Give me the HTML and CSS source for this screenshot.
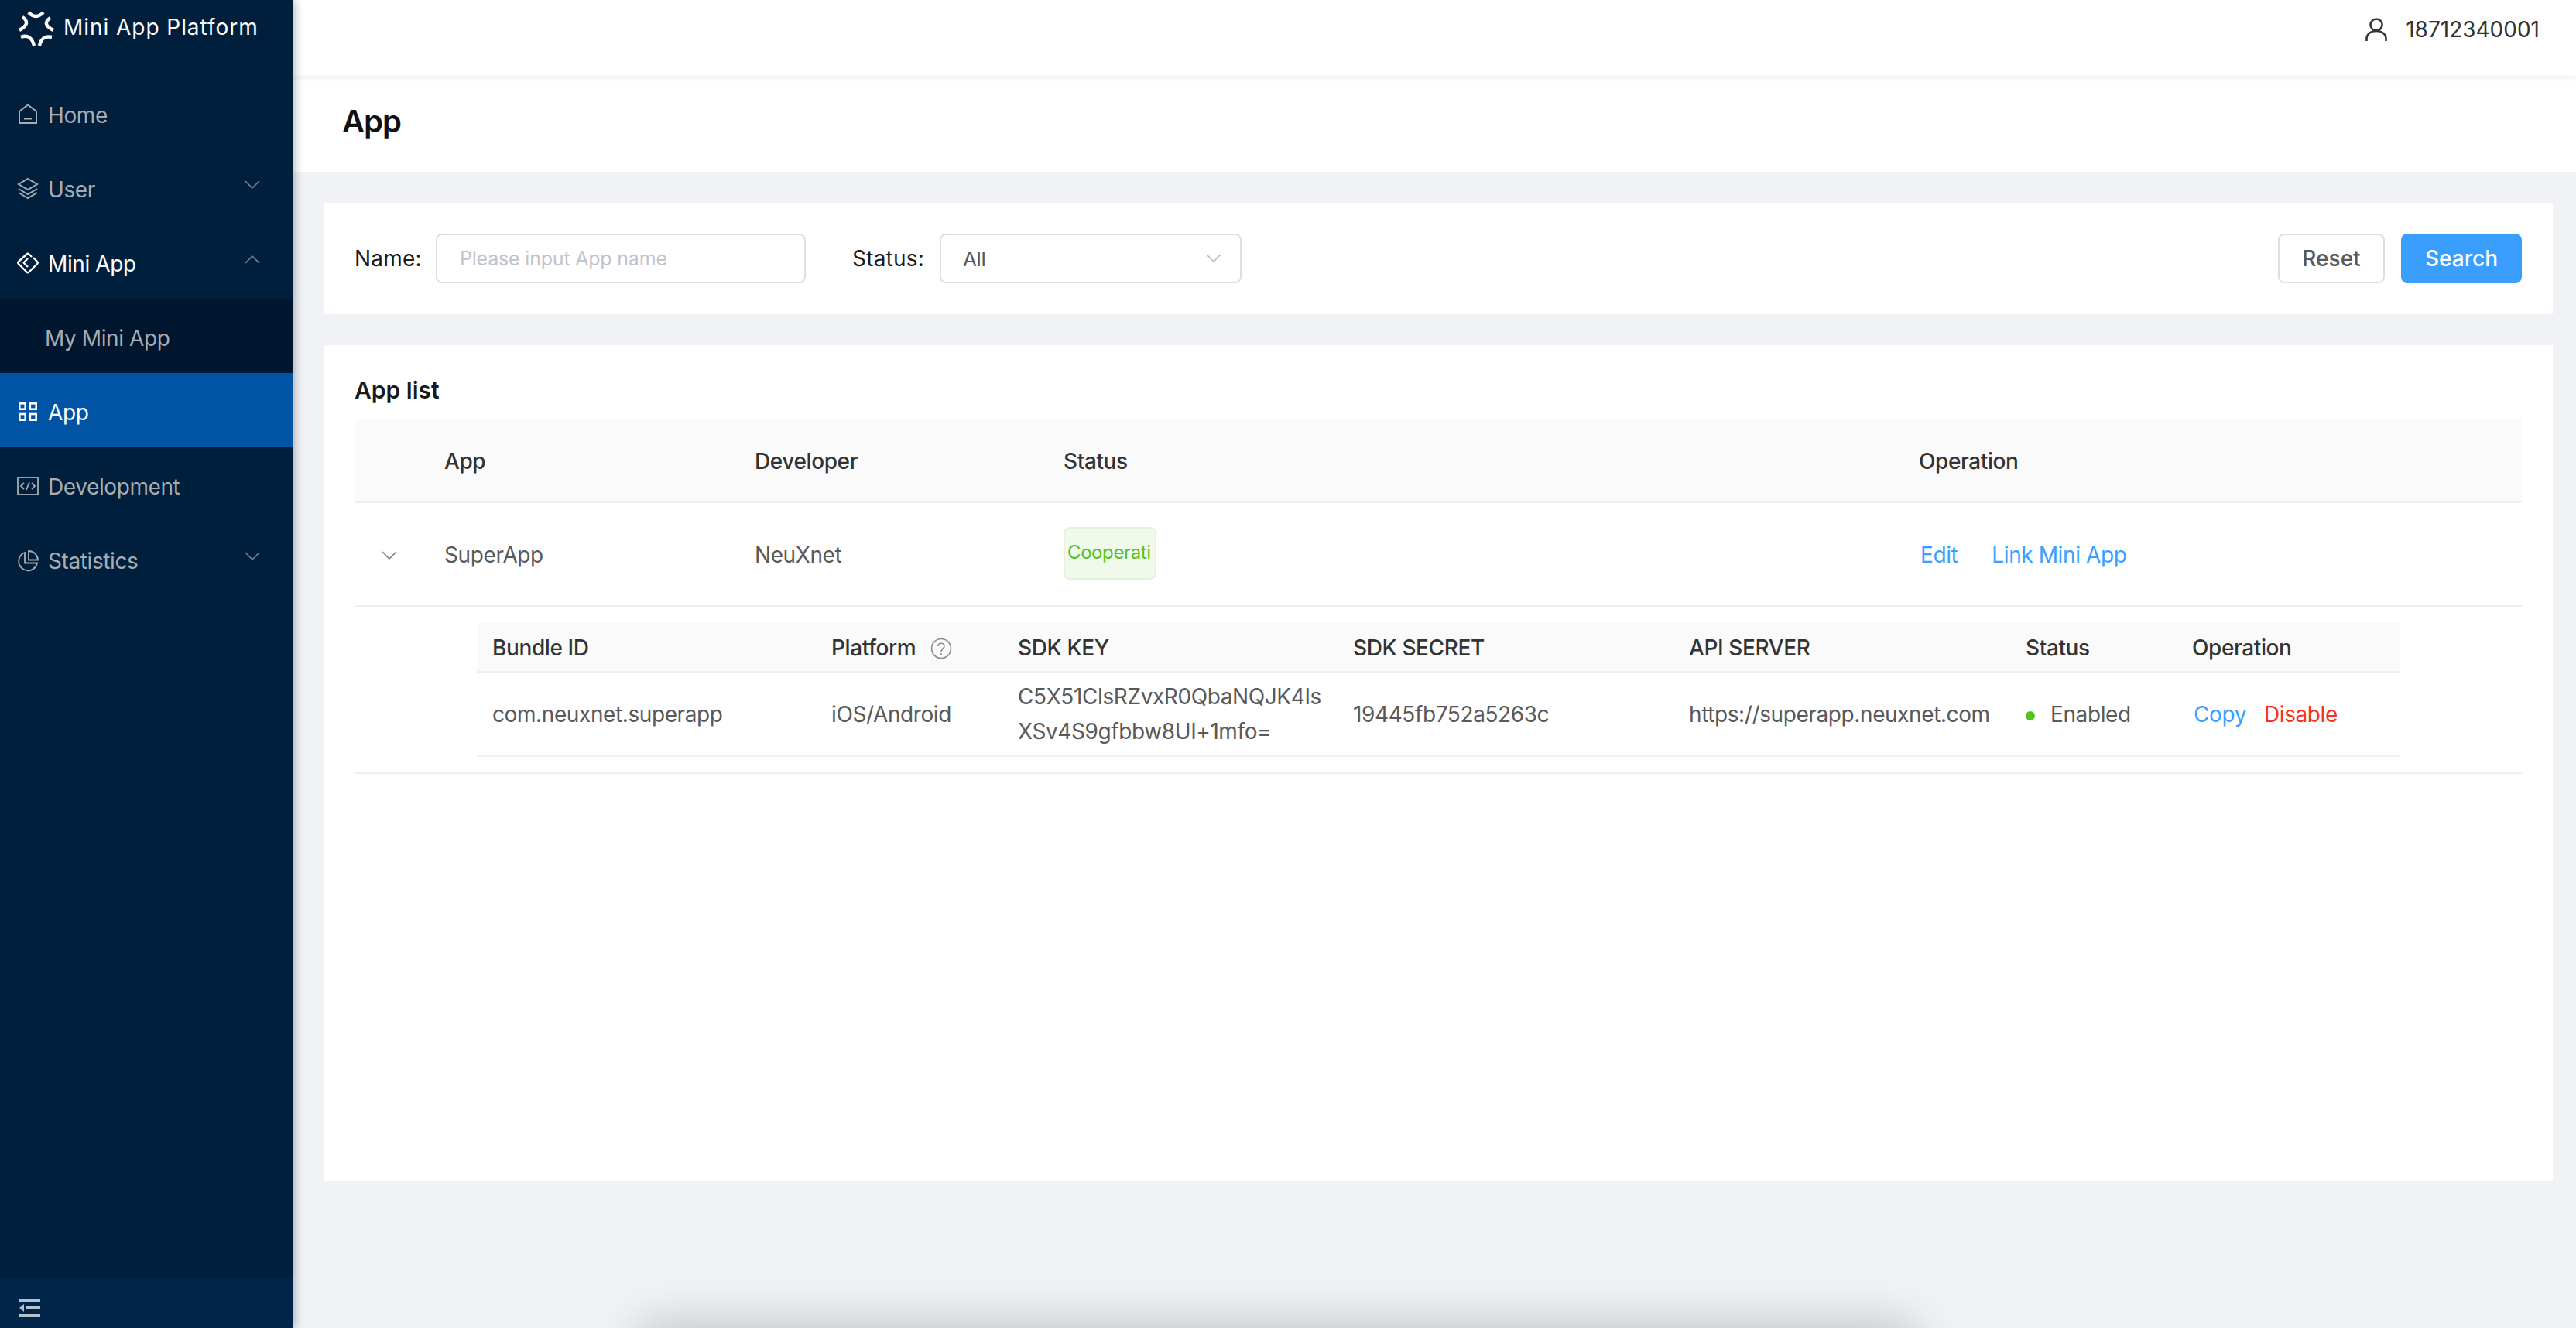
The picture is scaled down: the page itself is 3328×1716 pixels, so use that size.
FILE: index.html
```html
<!DOCTYPE html>
<html lang="en">

<head>
    <meta charset="UTF-8">
    <title>Mini App Platform</title>
    <link rel="stylesheet" href="styles.css">
</head>

<body>
    <div class="layout">
        <!-- sidebar -->
        <aside class="sidebar">
            <div class="logo">
                <svg class="logo-icon" viewBox="0 0 46 46" fill="none" stroke="#fff" stroke-width="4.4">
                    <path d="M13 1 Q22 11 32 1" />
                    <path d="M5 7 Q17 15 1 24" />
                    <path d="M41 8 Q29 16 45 24" />
                    <path d="M3 33 Q16 28 20 44" />
                    <path d="M27 44 Q30 30 43 33" />
                </svg>
                <span class="logo-text">Mini App Platform</span>
            </div>
            <nav class="menu">
                <div class="menu-item">
                    <svg class="menu-icon" viewBox="0 0 28 28" fill="none" stroke="currentColor" stroke-width="2">
                        <path d="M3 24 V9 L14 0.5 L25 9 V24 Z" />
                        <path d="M9 18.5 H19" />
                    </svg>
                    <span>Home</span>
                </div>
                <div class="menu-item">
                    <svg class="menu-icon" viewBox="0 0 28 28" fill="none" stroke="currentColor" stroke-width="2">
                        <path d="M14 0 L26 7 L14 14 L2 7 Z" />
                        <path d="M2 13 L14 20 L26 13" />
                        <path d="M2 18 L14 25 L26 18" />
                    </svg>
                    <span>User</span>
                    <svg class="arrow" viewBox="0 0 20 12" fill="none" stroke="currentColor" stroke-width="1.5">
                        <path d="M1 1 L10 10 L19 1" />
                    </svg>
                </div>
                <div class="menu-item open">
                    <svg class="menu-icon" viewBox="0 0 28 28" fill="none" stroke="currentColor" stroke-width="2.4" stroke-linejoin="round">
                        <path d="M19 5 L15.5 1.5 Q14 0 12.5 1.5 L2 11 Q0.5 12.5 2 14 L12.5 24.5 Q14 26 15.5 24.5 L26 14 Q27.5 12.5 26 11 L21 6" />
                        <path d="M14 7 L8.5 12.5 L14 18" />
                    </svg>
                    <span>Mini App</span>
                    <svg class="arrow" viewBox="0 0 20 12" fill="none" stroke="currentColor" stroke-width="1.5">
                        <path d="M1 11 L10 2 L19 11" />
                    </svg>
                </div>
                <div class="submenu">
                    <div class="menu-item sub">My Mini App</div>
                </div>
                <div class="menu-item active">
                    <svg class="menu-icon" viewBox="0 0 28 28" fill="none" stroke="currentColor" stroke-width="2.6">
                        <rect x="3.3" y="2.3" width="7.4" height="7.4" />
                        <rect x="16.8" y="2.3" width="7.9" height="7.4" />
                        <rect x="3.3" y="16" width="7.4" height="7.7" />
                        <rect x="16.8" y="16" width="7.9" height="7.7" />
                    </svg>
                    <span>App</span>
                </div>
                <div class="menu-item">
                    <svg class="menu-icon" viewBox="0 0 28 28" fill="none" stroke="currentColor" stroke-width="1.8">
                        <rect x="1" y="2" width="26" height="22" />
                        <path d="M9 9 L5 13 L9 17" />
                        <path d="M19 9 L23 13 L19 17" />
                        <path d="M16 8 L12 18" />
                    </svg>
                    <span>Development</span>
                </div>
                <div class="menu-item">
                    <svg class="menu-icon" viewBox="0 0 28 28" fill="none" stroke="currentColor" stroke-width="1.8">
                        <path d="M10 3 A12 12 0 1 0 26 16.5 H10 Z" />
                        <path d="M15 1 A12 12 0 0 1 27 12.5 H15 Z" />
                    </svg>
                    <span>Statistics</span>
                    <svg class="arrow" viewBox="0 0 20 12" fill="none" stroke="currentColor" stroke-width="1.5">
                        <path d="M1 1 L10 10 L19 1" />
                    </svg>
                </div>
            </nav>
            <div class="collapse-bar">
                <svg class="collapse-icon" viewBox="0 0 28 24" fill="#b8c0cc">
                    <rect x="0" y="0" width="28" height="4" />
                    <rect x="10" y="10" width="18" height="4" />
                    <rect x="0" y="20" width="28" height="4" />
                    <path d="M7 7 V17 L1 12 Z" />
                </svg>
            </div>
        </aside>

        <!-- main content -->
        <div class="main">
            <header class="topbar">
                <svg class="user-icon" viewBox="0 0 28 30" fill="none" stroke="#333" stroke-width="2.6">
                    <circle cx="14" cy="9" r="7.5" />
                    <path d="M1.5 30 V27 C1.5 21 7 17 14 17 C21 17 26.5 21 26.5 27 V30" />
                </svg>
                <span class="user-name">18712340001</span>
            </header>
            <div class="page-title">App</div>

            <div class="content">
                <section class="card search-card">
                    <label class="field-label">Name:</label>
                    <div class="text-input">Please input App name</div>
                    <label class="field-label status-label">Status:</label>
                    <div class="select-input">
                        <span>All</span>
                        <svg class="select-arrow" viewBox="0 0 20 12" fill="none" stroke="#b4b8bf" stroke-width="1.5">
                            <path d="M1 1 L10 10 L19 1" />
                        </svg>
                    </div>
                    <div class="search-actions">
                        <button class="btn">Reset</button>
                        <button class="btn btn-primary">Search</button>
                    </div>
                </section>

                <section class="card list-card">
                    <h2 class="list-title">App list</h2>
                    <table class="app-table">
                        <thead>
                            <tr>
                                <th class="col-expand"></th>
                                <th class="col-app">App</th>
                                <th class="col-dev">Developer</th>
                                <th class="col-status">Status</th>
                                <th>Operation</th>
                            </tr>
                        </thead>
                        <tbody>
                            <tr class="app-row">
                                <td class="expand-cell">
                                    <svg class="expand-icon" viewBox="0 0 20 12" fill="none" stroke="#777" stroke-width="1.5">
                                        <path d="M1 1 L10 10 L19 1" />
                                    </svg>
                                </td>
                                <td>SuperApp</td>
                                <td>NeuXnet</td>
                                <td><div class="tag">Cooperati</div></td>
                                <td><a class="link link-edit">Edit</a><a class="link">Link Mini App</a></td>
                            </tr>
                            <tr class="detail-row">
                                <td colspan="5" class="detail-cell">
                                    <table class="bundle-table">
                                        <thead>
                                            <tr>
                                                <th class="b-bundle">Bundle ID</th>
                                                <th class="b-platform">
                                                    Platform
                                                    <svg class="help-icon" viewBox="0 0 28 28" fill="none" stroke="#8c8c8c" stroke-width="1.6">
                                                        <circle cx="14" cy="14" r="12.5" />
                                                        <path d="M10 11 C10 6 18 6 18 11 C18 14 14 14 14 18" />
                                                        <path d="M14 20 V22" />
                                                    </svg>
                                                </th>
                                                <th class="b-key">SDK KEY</th>
                                                <th class="b-secret">SDK SECRET</th>
                                                <th class="b-server">API SERVER</th>
                                                <th class="b-status">Status</th>
                                                <th>Operation</th>
                                            </tr>
                                        </thead>
                                        <tbody>
                                            <tr>
                                                <td>com.neuxnet.superapp</td>
                                                <td>iOS/Android</td>
                                                <td class="key-cell">C5X51ClsRZvxR0QbaNQJK4IsXSv4S9gfbbw8UI+1mfo=</td>
                                                <td>19445fb752a5263c</td>
                                                <td>https://superapp.neuxnet.com</td>
                                                <td><span class="dot"></span>Enabled</td>
                                                <td><a class="link link-copy">Copy</a><a class="link-danger">Disable</a></td>
                                            </tr>
                                        </tbody>
                                    </table>
                                </td>
                            </tr>
                        </tbody>
                    </table>
                </section>
            </div>
        </div>
    </div>
    <div class="offscreen-shadow"></div>
</body>

</html>
```

FILE: styles.css
```css
* {
    box-sizing: border-box;
}

html,
body {
    margin: 0;
    height: 100%;
    overflow: hidden;
}

body {
    font-family: Inter, "Noto Sans", sans-serif;
    font-size: 28px;
    letter-spacing: -0.4px;
    color: #595959;
    background-color: #f0f2f5;
    position: relative;
}

.layout {
    display: flex;
    height: 1716px;
}

/* sidebar */
.sidebar {
    width: 378px;
    flex-shrink: 0;
    display: flex;
    flex-direction: column;
    background-color: #001f3d;
    box-shadow: 2px 0 12px rgba(0, 21, 41, 0.35);
    position: relative;
    z-index: 2;
}

.logo {
    height: 98px;
    padding: 0 0 28px 24px;
    display: flex;
    align-items: center;
    gap: 12px;
}

.logo-icon {
    width: 46px;
    height: 46px;
    margin-top: 6px;
    overflow: visible;
}

.logo-text {
    color: #ffffff;
    font-size: 28px;
    letter-spacing: 0.95px;
}

.menu {
    flex: 1;
}

.menu-item {
    height: 96px;
    display: flex;
    align-items: center;
    padding: 6px 42px 0 22px;
    color: #a6adb4;
}

.menu-icon {
    width: 28px;
    height: 28px;
    margin-right: 12px;
    flex-shrink: 0;
    overflow: visible;
}

.arrow {
    width: 20px;
    height: 12px;
    margin-left: auto;
    margin-top: -12px;
    opacity: 0.75;
}

.menu-item.open {
    color: #ffffff;
}

.menu-item.open .arrow {
    color: #a6adb4;
}

.submenu {
    background-color: #00162e;
}

.menu-item.sub {
    padding-left: 58px;
}

.menu-item.active {
    background-color: #0053a5;
    color: #ffffff;
}

.collapse-bar {
    height: 64px;
    background-color: #002548;
    display: flex;
    align-items: center;
    padding: 12px 0 0 24px;
}

.collapse-icon {
    width: 28px;
    height: 24px;
}

/* header */
.main {
    flex: 1;
    min-width: 0;
}

.topbar {
    height: 98px;
    background-color: #ffffff;
    box-shadow: 0 2px 8px rgba(0, 21, 41, 0.08);
    display: flex;
    align-items: center;
    justify-content: flex-end;
    padding: 0 47px 22px 0;
    position: relative;
    color: #333333;
}

.user-icon {
    width: 28px;
    height: 30px;
    margin-right: 24px;
}

.user-name {
    letter-spacing: 0;
}

.page-title {
    height: 124px;
    background-color: #ffffff;
    padding: 34px 0 0 64px;
    font-size: 40px;
    font-weight: 600;
    letter-spacing: -1px;
    color: #111111;
}

.content {
    padding: 40px 30px 0 40px;
}

.card {
    background-color: #ffffff;
}

/* search form */
.search-card {
    height: 144px;
    padding: 0 40px;
    display: flex;
    align-items: center;
    margin-bottom: 40px;
}

.field-label {
    color: #1a1a1a;
    width: 105px;
    flex-shrink: 0;
    letter-spacing: 0.2px;
}

.status-label {
    width: 113px;
    margin-left: 60px;
}

.text-input,
.select-input {
    height: 64px;
    border: 2px solid #dcdfe6;
    border-radius: 8px;
    display: flex;
    align-items: center;
    padding: 0 29px;
    font-size: 26px;
}

.text-input {
    width: 478px;
    color: #bfc3cb;
    font-size: 25px;
    letter-spacing: -0.2px;
}

.select-input {
    width: 390px;
    justify-content: space-between;
    padding-left: 28px;
    padding-right: 24px;
}

.select-arrow {
    width: 20px;
    height: 12px;
}

.search-actions {
    margin-left: auto;
    display: flex;
    gap: 21px;
}

.btn {
    height: 64px;
    width: 138px;
    border: 2px solid #dcdfe6;
    border-radius: 8px;
    background-color: #ffffff;
    color: #595959;
    font-family: inherit;
    font-size: 28px;
    font-weight: 500;
}

.btn-primary {
    width: 156px;
    background-color: #3a9eff;
    border-color: #3a9eff;
    color: #ffffff;
}

/* list */
.list-card {
    height: 1080px;
    padding: 0 40px;
}

.list-title {
    margin: 0;
    height: 96px;
    padding-top: 40px;
    font-size: 30px;
    font-weight: 600;
    letter-spacing: 0;
    color: #1a1a1a;
}

table {
    border-collapse: collapse;
    table-layout: fixed;
    width: 100%;
}

th {
    text-align: left;
    font-weight: 500;
    color: #333333;
    background-color: #fafafa;
    border-bottom: 2px solid #eceff4;
    padding: 2px 20px 0;
}

td {
    padding: 2px 20px 0;
    border-bottom: 2px solid #eceff4;
}

.app-table > thead > tr > th {
    height: 107px;
}

.col-expand {
    width: 96px;
}

.col-app {
    width: 401px;
}

.col-dev {
    width: 399px;
}

.col-status {
    width: 1105px;
}

.app-row > td {
    height: 134px;
}

.expand-cell {
    text-align: center;
}

.expand-icon {
    width: 20px;
    height: 12px;
    display: block;
    margin: 2px auto 0;
    position: relative;
    left: -3px;
}

.tag {
    width: 120px;
    height: 68px;
    padding: 0 3px;
    line-height: 62px;
    background-color: #f0f9eb;
    border: 2px solid #e1f3d8;
    border-radius: 8px;
    color: #52c41a;
    font-size: 24px;
    white-space: nowrap;
    margin-top: -4px;
}

.link {
    color: #3a9eff;
}

.link-edit {
    margin-right: 44px;
    margin-left: 2px;
}

.link-copy {
    margin-right: 23px;
    margin-left: 2px;
}

.link-danger {
    color: #f5321e;
}

.detail-cell {
    padding: 20px 158px 20px 158px;
    height: 216px;
}

.bundle-table th {
    height: 63px;
}

.bundle-table td {
    height: 109px;
    line-height: 45px;
}

.b-bundle {
    width: 438px;
}

.b-platform {
    width: 241px;
}

.b-key {
    width: 433px;
}

.b-secret {
    width: 434px;
}

.b-server {
    width: 435px;
}

.b-status {
    width: 215px;
}

.key-cell {
    word-break: break-all;
}

.help-icon {
    width: 28px;
    height: 28px;
    margin-left: 12px;
    vertical-align: -5px;
}

.dot {
    display: inline-block;
    width: 12px;
    height: 12px;
    border-radius: 50%;
    background-color: #52c41a;
    margin-right: 20px;
    vertical-align: 2px;
}

/* shadow of a dialog sitting just under the window */
.offscreen-shadow {
    position: absolute;
    left: 830px;
    top: 1716px;
    width: 1640px;
    height: 60px;
    border-radius: 8px;
    box-shadow: 0 0 60px 6px rgba(0, 0, 0, 0.2);
}
```
